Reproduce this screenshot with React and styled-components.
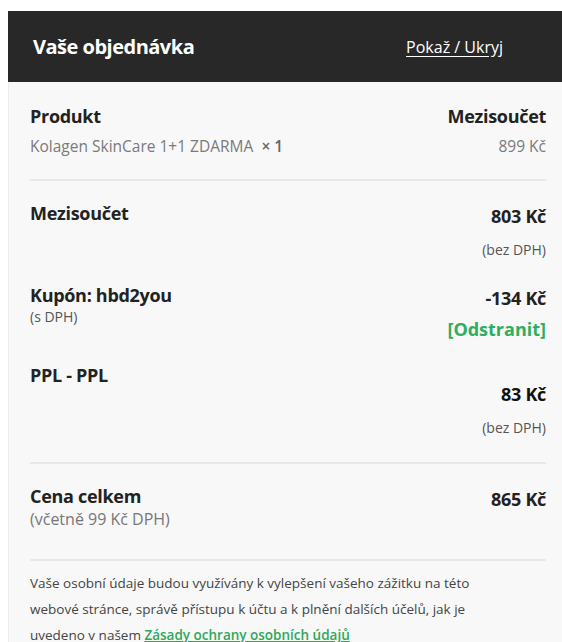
import React from "react";
import styled, { createGlobalStyle } from "styled-components";

const GlobalStyle = createGlobalStyle`
  body {
    margin: 0;
    background: #fff;
    font-family: "Open Sans", "Noto Sans", sans-serif;
    overflow: hidden;
  }
`;

const App = () => {
  return (
    <Page>
      <GlobalStyle />
      <Panel>
        <Header>
          <Title>Vaše objednávka</Title>
          <Toggle href="#">Pokaž / Ukryj</Toggle>
        </Header>
        <Body>
          <Row>
            <Cell>
              <Label>Produkt</Label>
              <ProductName>
                Kolagen SkinCare 1+1 ZDARMA <Qty>× 1</Qty>
              </ProductName>
            </Cell>
            <Cell right>
              <Label>Mezisoučet</Label>
              <ProductName>899 Kč</ProductName>
            </Cell>
          </Row>
          <Divider top={21} />

          <Row pad={20}>
            <Cell>
              <Label>Mezisoučet</Label>
            </Cell>
            <Cell right>
              <Amount offset={3}>803 Kč</Amount>
              <Note gap={13}>(bez DPH)</Note>
            </Cell>
          </Row>

          <Row pad={24}>
            <Cell>
              <Label>Kupón: hbd2you</Label>
              <Note gap={1}>(s DPH)</Note>
            </Cell>
            <Cell right>
              <Amount offset={3}>-134 Kč</Amount>
              <Remove href="#">[Odstranit]</Remove>
            </Cell>
          </Row>

          <Row pad={22}>
            <Cell>
              <Label>PPL - PPL</Label>
            </Cell>
            <Cell right>
              <Amount offset={19} dark>83 Kč</Amount>
              <Note gap={13}>(bez DPH)</Note>
            </Cell>
          </Row>
          <Divider top={25} />

          <Row pad={20}>
            <Cell>
              <Label>Cena celkem</Label>
              <Sub>(včetně 99 Kč DPH)</Sub>
            </Cell>
            <Cell right>
              <Amount offset={3}>865 Kč</Amount>
            </Cell>
          </Row>
          <Divider top={30} />

          <Privacy>
            Vaše osobní údaje budou využívány k vylepšení vašeho zážitku na této
            <br />
            webové stránce, správě přístupu k účtu a k plnění dalších účelů, jak je
            <br />
            uvedeno v našem <PolicyLink href="#">Zásady ochrany osobních údajů</PolicyLink>
          </Privacy>
        </Body>
      </Panel>
    </Page>
  );
};

export default App;

const Page = styled.div`
  padding: 11px 0 0 8px;
`;

const Panel = styled.div`
  width: 554px;
`;

const Header = styled.div`
  height: 71px;
  background: #282828;
  display: flex;
  align-items: center;
  justify-content: space-between;
  padding: 0 59px 0 25px;
`;

const Title = styled.h3`
  margin: 0;
  color: #fff;
  font-size: 20px;
  font-weight: 700;
  letter-spacing: -0.5px;
`;

const Toggle = styled.a`
  color: #fff;
  font-size: 16px;
  text-decoration: underline;
  text-underline-offset: 3px;
`;

const Body = styled.div`
  background: #f8f8f8;
  border-left: 1px solid #ececec;
  padding: 22px 16px 0 21px;
  height: 560px;
`;

const Row = styled.div`
  display: flex;
  justify-content: space-between;
  align-items: flex-start;
  padding-top: ${(p) => p.pad || 0}px;
`;

const Cell = styled.div`
  display: flex;
  flex-direction: column;
  align-items: ${(p) => (p.right ? "flex-end" : "flex-start")};
  text-align: ${(p) => (p.right ? "right" : "left")};
`;

const Label = styled.div`
  font-size: 18px;
  line-height: 24px;
  font-weight: 700;
  color: #222;
  letter-spacing: -0.3px;
`;

const ProductName = styled.div`
  font-size: 15.5px;
  line-height: 24px;
  margin-top: 6px;
  color: #7a7a7a;
`;

const Qty = styled.strong`
  margin-left: 4px;
  font-weight: 600;
  color: #666;
`;

const Amount = styled.div`
  margin-top: ${(p) => p.offset || 0}px;
  font-size: 18px;
  line-height: 24px;
  font-weight: 700;
  color: ${(p) => (p.dark ? "#111" : "#222")};
  letter-spacing: -0.3px;
`;

const Note = styled.div`
  margin-top: ${(p) => p.gap || 0}px;
  font-size: 14px;
  line-height: 18px;
  color: #555;
`;

const Sub = styled.div`
  margin-top: 1px;
  font-size: 16px;
  line-height: 20px;
  color: #777;
`;

const Remove = styled.a`
  margin-top: 7px;
  font-size: 18px;
  line-height: 24px;
  font-weight: 700;
  color: #2fae5e;
  text-decoration: none;
`;

const Divider = styled.div`
  height: 2px;
  background: #e8e8e8;
  margin-top: ${(p) => p.top || 0}px;
`;

const Privacy = styled.p`
  margin: 9px 0 0;
  font-size: 13.5px;
  line-height: 26px;
  color: #444;
`;

const PolicyLink = styled.a`
  color: #2fa85a;
  font-weight: 600;
  text-decoration: underline;
`;
